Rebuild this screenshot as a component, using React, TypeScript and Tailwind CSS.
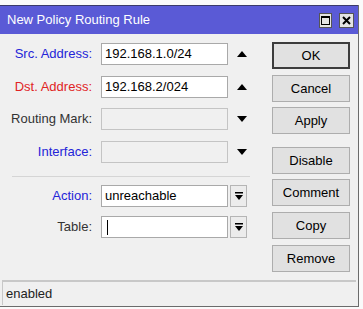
import React from "react";

const font = { fontFamily: '"Liberation Sans", Arial, sans-serif' };

function Up() {
  return (
    <svg width="10" height="6" viewBox="0 0 10 6" className="block">
      <path d="M0 6 L5 0 L10 6 Z" fill="#000" />
    </svg>
  );
}

function Down() {
  return (
    <svg width="10" height="6" viewBox="0 0 10 6" className="block">
      <path d="M0 0 L10 0 L5 6 Z" fill="#000" />
    </svg>
  );
}

function DropIcon() {
  return (
    <svg width="8" height="8" viewBox="0 0 8 8" className="block">
      <rect x="0" y="0" width="8" height="1.5" fill="#000" />
      <path d="M0 3 L8 3 L4 8 Z" fill="#000" />
    </svg>
  );
}

function Row({
  label,
  color,
  value,
  disabled,
  arrow,
  combo,
  cursor,
  className,
}: {
  label: string;
  color: string;
  value?: string;
  disabled?: boolean;
  arrow?: "up" | "down";
  combo?: boolean;
  cursor?: boolean;
  className?: string;
}) {
  return (
    <div className={`flex h-[22px] items-center ${className ?? ""}`}>
      <div className={`w-[93px] pr-[1px] text-right text-[13px] ${color}`}>{label}</div>
      <div
        className={`ml-[8px] flex h-[22px] w-[127px] items-center border px-[3px] text-[13px] text-black ${
          disabled ? "border-[#c4c4c4] bg-[#f0f0f0]" : "border-[#a9a9a9] bg-white"
        }`}
      >
        {value}
        {cursor ? <span className="ml-[2px] h-[15px] w-[1px] bg-black" /> : null}
      </div>
      {arrow ? (
        <div className="ml-[8px] flex w-[12px] justify-center">{arrow === "up" ? <Up /> : <Down />}</div>
      ) : null}
      {combo ? (
        <div className="ml-[2px] flex h-[22px] w-[17px] items-center justify-center border border-[#b5b5b5] bg-[#ececec]">
          <DropIcon />
        </div>
      ) : null}
    </div>
  );
}

function Btn({ children, def, className }: { children: React.ReactNode; def?: boolean; className?: string }) {
  return (
    <div
      className={`flex h-[27px] w-[78px] items-center justify-center bg-[#e1e1e1] text-[13px] text-black ${
        def ? "border-2 border-[#3c3c3c]" : "border border-[#adadad]"
      } ${className ?? ""}`}
    >
      {children}
    </div>
  );
}

export default function App() {
  return (
    <div className="h-[309px] w-[363px] overflow-hidden bg-[#fafafa]" style={font}>
      <div className="mt-[5px] flex h-[302px] w-[359px] flex-col border-r border-b border-[#6b6b6b] bg-[#f0f0f0]">
        <div className="flex h-[29px] items-center border-t border-[#3a3a6a] bg-[#5a5ad6] pl-[7px] pr-[4px]">
          <span className="flex-1 text-[13px] text-white">New Policy Routing Rule</span>
          <div className="flex h-[15px] w-[13px] items-center justify-center border border-[#555] bg-[#e4e4e4]">
            <div className="h-[9px] w-[9px] border border-black border-t-2" />
          </div>
          <div className="ml-[7px] flex h-[15px] w-[15px] items-center justify-center border border-[#555] bg-[#e4e4e4]">
            <svg width="9" height="9" viewBox="0 0 9 9" className="block">
              <path d="M1 1 L8 8 M8 1 L1 8" stroke="#000" strokeWidth="2" />
            </svg>
          </div>
        </div>

        <div className="flex flex-1">
          <div className="flex w-[264px] flex-col pt-[9px]">
            <Row label="Src. Address:" color="text-[#2424d8]" value="192.168.1.0/24" arrow="up" />
            <Row label="Dst. Address:" color="text-[#e02424]" value="192.168.2/024" arrow="up" className="mt-[11px]" />
            <Row label="Routing Mark:" color="text-[#333]" disabled arrow="down" className="mt-[10px]" />
            <Row label="Interface:" color="text-[#2424d8]" disabled arrow="down" className="mt-[11px]" />
            <div className="ml-[12px] mt-[13px] h-[2px] w-[238px] border-t border-[#d5d5d5] border-b-white" />
            <Row label="Action:" color="text-[#2424d8]" value="unreachable" combo className="mt-[7px]" />
            <Row label="Table:" color="text-[#333]" cursor combo className="mt-[9px]" />
          </div>
          <div className="flex flex-col pl-[8px] pt-[8px]">
            <Btn def>OK</Btn>
            <Btn className="mt-[6px]">Cancel</Btn>
            <Btn className="mt-[5px]">Apply</Btn>
            <Btn className="mt-[13px]">Disable</Btn>
            <Btn className="mt-[5px]">Comment</Btn>
            <Btn className="mt-[6px]">Copy</Btn>
            <Btn className="mt-[6px]">Remove</Btn>
          </div>
        </div>

        <div className="mx-[2px] mb-[1px] flex h-[25px] items-center border-t-2 border-l border-[#c8c8c8] pl-[3px] text-[13px] text-[#222]">
          enabled
        </div>
      </div>
    </div>
  );
}
